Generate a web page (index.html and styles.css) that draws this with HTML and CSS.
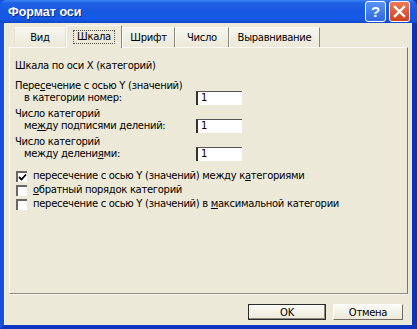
FILE: index.html
```html
<html>
<head>
  <meta charset="UTF-8">
  <title>Формат оси</title>
  <link rel="stylesheet" href="styles.css">
</head>
<body>
  <div class="window">
    <div class="titlebar">
      <span class="title">Формат оси</span>
      <div class="controls">
        <span class="ctl help">?</span>
        <span class="ctl close">
          <svg width="13" height="13" viewBox="0 0 13 13"><path d="M2 2 L11 11 M11 2 L2 11" stroke="#fff" stroke-width="2.4" stroke-linecap="square"/></svg>
        </span>
      </div>
    </div>
    <div class="client">
      <div class="tabs">
        <div class="tab t1">Вид</div>
        <div class="tab t2 active"><span class="focus">Шкала</span></div>
        <div class="tab t3">Шрифт</div>
        <div class="tab t4">Число</div>
        <div class="tab t5">Выравнивание</div>
      </div>
      <div class="panel">
        <div class="heading">Шкала по оси X (категорий)</div>

        <div class="group">
          <div class="labels">
            <div>Пере<u>с</u>ечение с осью Y (значений)</div>
            <div class="indent">в категории номер:</div>
          </div>
          <div class="field">1</div>
        </div>

        <div class="group">
          <div class="labels">
            <div>Число категорий</div>
            <div class="indent">ме<u>ж</u>ду подписями делений:</div>
          </div>
          <div class="field">1</div>
        </div>

        <div class="group">
          <div class="labels">
            <div>Число категорий</div>
            <div class="indent">между делени<u>я</u>ми:</div>
          </div>
          <div class="field">1</div>
        </div>

        <div class="checks">
          <div class="check">
            <span class="box on">
              <svg width="9" height="9" viewBox="0 0 9 9"><path d="M1 4 L3.5 6.5 L8 1.5" fill="none" stroke="#000" stroke-width="1.8"/></svg>
            </span>
            <span>пересечение с осью Y (значений) между к<u>а</u>тегориями</span>
          </div>
          <div class="check">
            <span class="box"></span>
            <span><u>о</u>братный порядок категорий</span>
          </div>
          <div class="check">
            <span class="box"></span>
            <span>пересечение с осью Y (значений) в <u>м</u>аксимальной категории</span>
          </div>
        </div>
      </div>
      <div class="buttons">
        <div class="btn default">OK</div>
        <div class="btn cancel">Отмена</div>
      </div>
    </div>
  </div>
</body>
</html>
```

FILE: styles.css
```css
body {
  margin: 0;
  padding: 0;
  background: #0a3fd0;
  font-family: "DejaVu Sans", Verdana, sans-serif;
  font-size: 10px;
  letter-spacing: -0.3px;
  color: #000;
}
.window {
  width: 417px;
  height: 329px;
  box-sizing: border-box;
  display: flex;
  flex-direction: column;
  background: linear-gradient(to right, #0a3fd0, #1653e6 50%, #0a36c0);
  border-left: 4px solid #1550e0;
  border-right: 5px solid #0b33b8;
  border-bottom: 4px solid #0b34c0;
}
.titlebar {
  height: 23px;
  margin-left: -4px;
  margin-right: -5px;
  display: flex;
  align-items: center;
  justify-content: space-between;
  padding: 0 7px 0 8px;
  background: linear-gradient(to bottom, #3d86f5 0%, #1f63e6 12%, #1758e0 50%, #155ae8 80%, #0f48c8 100%);
  border-radius: 6px 6px 0 0;
}
.title {
  color: #fff;
  font-family: "Liberation Sans", Arial, sans-serif;
  font-weight: bold;
  font-size: 12.5px;
  letter-spacing: 0;
  text-shadow: 1px 1px 0 #0b2a8a;
}
.controls {
  display: flex;
  gap: 3px;
}
.ctl {
  width: 19px;
  height: 19px;
  border: 1px solid #fff;
  border-radius: 3px;
  display: flex;
  align-items: center;
  justify-content: center;
  color: #fff;
}
.help {
  background: linear-gradient(to bottom, #5b93f3, #2d68e0);
  font-family: "Liberation Sans", Arial, sans-serif;
  font-weight: bold;
  font-size: 15px;
}
.close {
  background: linear-gradient(to bottom, #eb7a55, #d2401c);
}
.client {
  flex: 1;
  background: #ece9d8;
  border-left: 1px solid #f7f5ee;
  display: flex;
  flex-direction: column;
  padding: 2px 3px 0 3px;
}
.tabs {
  display: flex;
  align-items: flex-end;
  height: 22px;
  padding-left: 6px;
  position: relative;
  z-index: 1;
}
.tab {
  height: 20px;
  box-sizing: border-box;
  display: flex;
  align-items: center;
  justify-content: center;
  border-top: 1px solid #fbfaf6;
  border-left: 1px solid #fbfaf6;
  border-right: 1px solid #8d8a7c;
  background: linear-gradient(to bottom, #f6f5ef, #ece9d8);
}
.t1 { width: 52px; border-left-color: #e6e3d4; border-right-color: #e0ddcf; }
.t2 { width: 56px; }
.t3 { width: 53px; }
.t4 { width: 54px; }
.t5 { width: 91px; }
.tab.active {
  height: 23px;
  margin-bottom: -1px;
  background: #ece9d8;
  border-left-color: #fff;
}
.focus {
  border: 1px dotted #555;
  padding: 0 3px;
  line-height: 12px;
}
.panel {
  height: 247px;
  box-sizing: border-box;
  margin: 0 1px 0 1px;
  border-top: 1px solid #fbfaf6;
  border-left: 1px solid #fff;
  border-right: 1px solid #6f7d5c;
  border-bottom: 1px solid #8f8c7e;
  box-shadow: 0 1px 0 #f8f6ee;
  padding: 12px 0 0 5px;
  line-height: 12px;
}
.heading {
  margin-bottom: 8px;
}
.group {
  display: grid;
  grid-template-columns: 181px 46px;
  align-items: end;
  margin-bottom: 4px;
}
.indent {
  padding-left: 9px;
}
.field {
  height: 14px;
  box-sizing: border-box;
  background: #fff;
  border-top: 1px solid #555;
  border-left: 2px solid #333;
  padding-left: 3px;
  line-height: 12px;
  margin-bottom: -1px;
}
.checks {
  margin-top: 9px;
}
.check {
  height: 14px;
  display: flex;
  align-items: center;
}
.box {
  width: 11px;
  height: 11px;
  box-sizing: border-box;
  margin: 0 6px 0 1px;
  background: #fff;
  border-top: 2px solid #666;
  border-left: 2px solid #666;
  display: flex;
  align-items: center;
  justify-content: center;
}
.buttons {
  display: flex;
  justify-content: flex-end;
  gap: 7px;
  padding: 10px 6px 0 0;
}
.btn {
  height: 16px;
  box-sizing: border-box;
  display: flex;
  align-items: center;
  justify-content: center;
  background: linear-gradient(to bottom, #fbfbf7, #ece9d8);
}
.default {
  width: 78px;
  border: 1px solid #2a2a2a;
  box-shadow: inset -1px -1px 0 #8a877a;
}
.cancel {
  width: 70px;
  border-top: 1px solid #fff;
  border-left: 1px solid #fff;
  border-right: 1px solid #6e6c62;
  border-bottom: 1px solid #6e6c62;
}
```
